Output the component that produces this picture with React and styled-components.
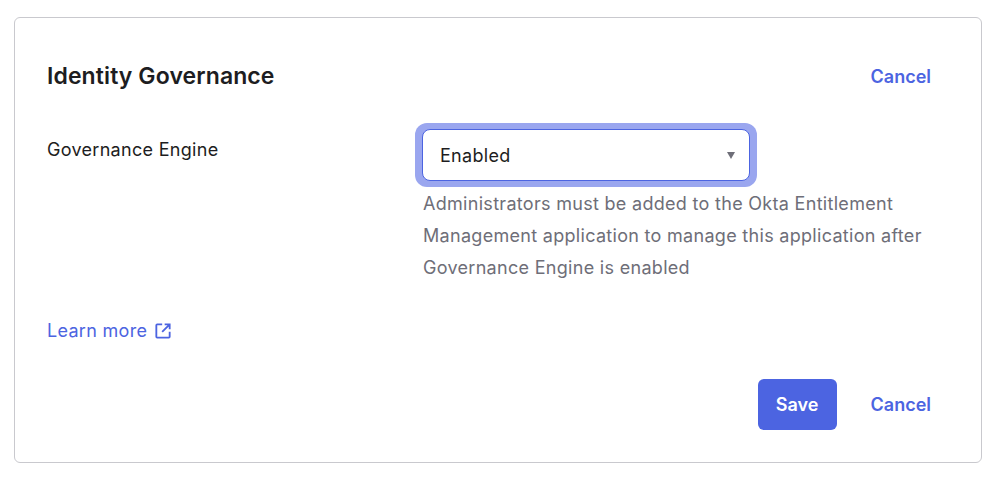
import styled, { createGlobalStyle } from "styled-components";

const Global = createGlobalStyle`
  body { margin: 0; background: #fff; font-family: Inter, "Noto Sans", sans-serif; }
`;

const Page = styled.div`
  padding: 17px 18px 20px 14px;
`;

const Card = styled.div`
  border: 1px solid #c9c9ce;
  border-radius: 6px;
  padding: 44px 50px 32px 32px;
  height: 446px;
  box-sizing: border-box;
  display: flex;
  flex-direction: column;
`;

const Header = styled.div`
  display: flex;
  justify-content: space-between;
  align-items: center;
`;

const Title = styled.h2`
  margin: 0;
  font-size: 23px;
  font-weight: 600;
  color: #1d1d21;
  letter-spacing: 0.1px;
`;

const LinkButton = styled.button`
  border: none;
  background: none;
  padding: 0;
  font-family: inherit;
  font-size: 18px;
  font-weight: 600;
  color: #4c64e1;
  cursor: pointer;
`;

const Row = styled.div`
  display: grid;
  grid-template-columns: 376px 1fr;
  margin-top: 42px;
`;

const Label = styled.div`
  font-size: 18px;
  color: #1d1d21;
  padding-top: 7px;
  letter-spacing: 0.3px;
`;

const SelectRing = styled.div`
  width: 342px;
  margin: -9px 0 0 -8px;
  padding: 6px 7px;
  border-radius: 12px;
  background: #9aa6ef;
  box-sizing: border-box;
`;

const Select = styled.div`
  height: 52px;
  box-sizing: border-box;
  border: 1px solid #4c64e1;
  border-radius: 8px;
  background: #fff;
  display: flex;
  align-items: center;
  justify-content: space-between;
  padding: 0 14px 0 17px;
  font-size: 18px;
  letter-spacing: 0.3px;
  color: #1d1d21;
`;

const Caret = styled.span`
  width: 0;
  height: 0;
  border-left: 4px solid transparent;
  border-right: 4px solid transparent;
  border-top: 7px solid #6e6e78;
`;

const Help = styled.p`
  margin: 0;
  padding-top: 1px;
  font-size: 18px;
  line-height: 32px;
  letter-spacing: 0.3px;
  color: #6e6e78;
  max-width: 520px;
`;

const LearnMore = styled.a`
  margin-top: 36px;
  display: inline-flex;
  align-items: center;
  gap: 6px;
  font-size: 18px;
  letter-spacing: 0.3px;
  color: #4c64e1;
  text-decoration: none;
  align-self: flex-start;
`;

const Footer = styled.div`
  margin-top: auto;
  display: flex;
  justify-content: flex-end;
  align-items: center;
  gap: 34px;
`;

const Primary = styled.button`
  height: 51px;
  width: 79px;
  border: none;
  border-radius: 6px;
  background: #4c64e1;
  color: #fff;
  font-family: inherit;
  font-size: 18px;
  font-weight: 600;
`;

export default function App() {
  return (
    <Page>
      <Global />
      <Card>
        <Header>
          <Title>Identity Governance</Title>
          <LinkButton>Cancel</LinkButton>
        </Header>
        <Row>
          <Label>Governance Engine</Label>
          <div>
            <SelectRing>
              <Select>
                Enabled
                <Caret />
              </Select>
            </SelectRing>
            <Help>
              Administrators must be added to the Okta Entitlement Management
              application to manage this application after Governance Engine is
              enabled
            </Help>
          </div>
        </Row>
        <LearnMore href="#">
          Learn more
          <svg width="20" height="20" viewBox="0 0 24 24" fill="none" stroke="currentColor" strokeWidth="2.2">
            <path d="M11 4H5a1 1 0 0 0-1 1v14a1 1 0 0 0 1 1h14a1 1 0 0 0 1-1v-6" />
            <path d="M14 4h6v6M20 4l-9 9" />
          </svg>
        </LearnMore>
        <Footer>
          <Primary>Save</Primary>
          <LinkButton>Cancel</LinkButton>
        </Footer>
      </Card>
    </Page>
  );
}
